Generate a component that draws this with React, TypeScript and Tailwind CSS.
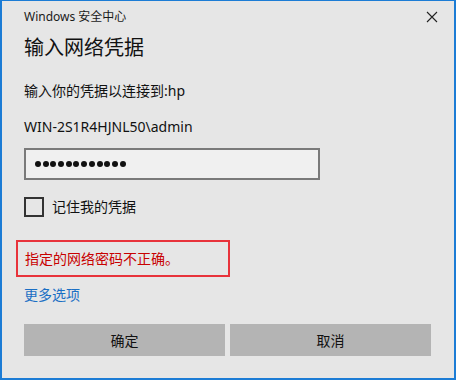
import React from "react";

const font = { fontFamily: '"Segoe UI", "Noto Sans", "Noto Sans CJK SC", sans-serif' };

export default function App() {
  return (
    <div
      className="w-[456px] h-[380px] bg-[#e6e6e6] border border-[#1c7cd5] border-b-2 border-l-2 border-r-2 flex flex-col text-[#000] overflow-hidden"
      style={font}
    >
      <div className="h-[31px] flex items-center justify-between pl-[22px] pr-[16px] shrink-0">
        <span className="text-[12px] leading-[16px] text-[#1a1a1a]">Windows 安全中心</span>
        <svg width="12" height="12" viewBox="0 0 12 12" className="mt-[1px]">
          <path d="M1 1 L11 11 M11 1 L1 11" stroke="#222" strokeWidth="1.1" />
        </svg>
      </div>
      <div className="pl-[22px] flex flex-col">
        <div className="text-[20px] leading-[28px] mt-[2px] text-[#111]">输入网络凭据</div>
        <div className="text-[14px] leading-[20px] mt-[19px] text-[#111]">输入你的凭据以连接到:hp</div>
        <div className="text-[14px] leading-[20px] mt-[16px] text-[#111]">WIN-2S1R4HJNL50\admin</div>
        <div className="mt-[11px] w-[296px] h-[32px] border-2 border-[#7a7a7a] bg-[#f0f0f0] flex items-center pl-[9px]">
          <div className="flex gap-[1.7px]">
            {Array.from({ length: 12 }).map((_, i) => (
              <span key={i} className="w-[6px] h-[6px] rounded-full bg-[#111] block" />
            ))}
          </div>
        </div>
        <div className="mt-[17px] flex items-center h-[20px]">
          <div className="w-[20px] h-[20px] border-2 border-[#333]" />
          <span className="ml-[8px] text-[14px] leading-[20px] text-[#111]">记住我的凭据</span>
        </div>
        <div className="mt-[23px] -ml-[8px] w-[214px] h-[37px] border-2 border-[#e8333b] flex items-center pl-[7px]">
          <span className="text-[14px] leading-[20px] text-[#c80000]">指定的网络密码不正确。</span>
        </div>
        <div className="mt-[8px] text-[14px] leading-[20px] text-[#1a6fc4]">更多选项</div>
        <div className="mt-[19px] flex gap-[5px]">
          <div className="w-[201px] h-[32px] bg-[#b4b4b4] flex items-center justify-center text-[14px] text-[#111]">确定</div>
          <div className="w-[201px] h-[32px] bg-[#b4b4b4] flex items-center justify-center text-[14px] text-[#111]">取消</div>
        </div>
      </div>
    </div>
  );
}
